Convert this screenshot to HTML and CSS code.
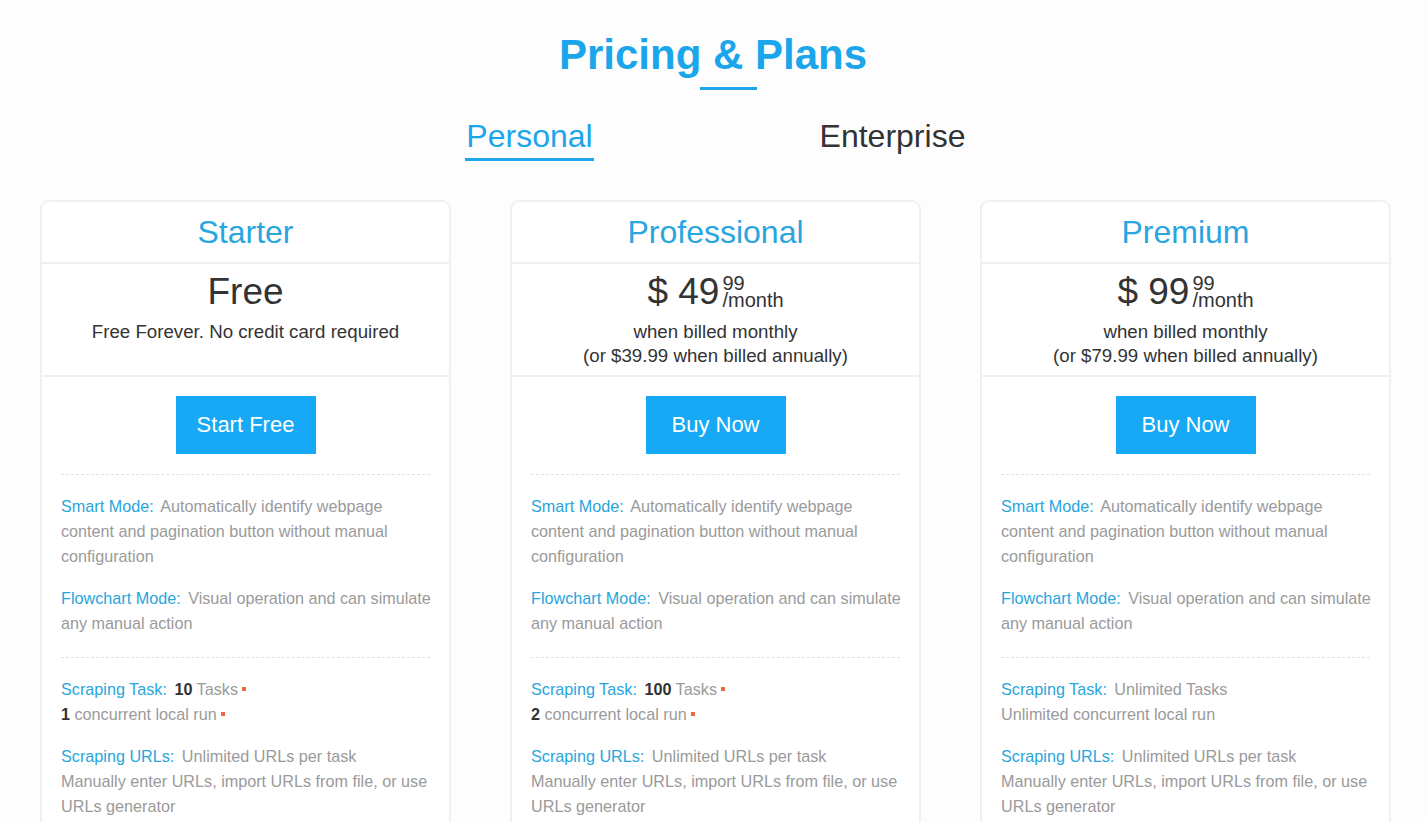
FILE: index.html
```html
<!DOCTYPE html>
<html>
<head>
<meta charset="utf-8">
<title>Pricing &amp; Plans</title>
<link rel="stylesheet" href="styles.css">
</head>
<body>
<div class="page">
  <h1 class="title">Pricing &amp; Plans</h1>
  <div class="title-bar"></div>
  <div class="tabs">
    <div class="tab"><span class="tab-label active">Personal</span></div>
    <div class="tab"><span class="tab-label">Enterprise</span></div>
  </div>
  <div class="cards">
    <div class="card">
      <div class="card-head">Starter</div>
      <div class="card-price">
        <div class="price-line"><span class="big">Free</span></div>
        <div class="price-note">Free Forever. No credit card required</div>
      </div>
      <div class="card-body">
        <div class="btn-row"><a class="btn">Start Free</a></div>
        <div class="group">
          <p class="feat"><span class="lbl">Smart Mode:</span> Automatically identify webpage content and pagination button without manual configuration</p>
          <p class="feat"><span class="lbl">Flowchart Mode:</span> Visual operation and can simulate any manual action</p>
        </div>
        <div class="group">
          <p class="feat"><span class="lbl">Scraping Task:</span> <b>10</b> Tasks<i class="dot"></i><br><b>1</b> concurrent local run<i class="dot"></i></p>
          <p class="feat"><span class="lbl">Scraping URLs:</span> Unlimited URLs per task<br>Manually enter URLs, import URLs from file, or use URLs generator</p>
        </div>
      </div>
    </div>
    <div class="card">
      <div class="card-head">Professional</div>
      <div class="card-price">
        <div class="price-line"><span class="big">$ 49</span><span class="sup"><span>99</span><span>/month</span></span></div>
        <div class="price-note">when billed monthly<br>(or $39.99 when billed annually)</div>
      </div>
      <div class="card-body">
        <div class="btn-row"><a class="btn">Buy Now</a></div>
        <div class="group">
          <p class="feat"><span class="lbl">Smart Mode:</span> Automatically identify webpage content and pagination button without manual configuration</p>
          <p class="feat"><span class="lbl">Flowchart Mode:</span> Visual operation and can simulate any manual action</p>
        </div>
        <div class="group">
          <p class="feat"><span class="lbl">Scraping Task:</span> <b>100</b> Tasks<i class="dot"></i><br><b>2</b> concurrent local run<i class="dot"></i></p>
          <p class="feat"><span class="lbl">Scraping URLs:</span> Unlimited URLs per task<br>Manually enter URLs, import URLs from file, or use URLs generator</p>
        </div>
      </div>
    </div>
    <div class="card">
      <div class="card-head">Premium</div>
      <div class="card-price">
        <div class="price-line"><span class="big">$ 99</span><span class="sup"><span>99</span><span>/month</span></span></div>
        <div class="price-note">when billed monthly<br>(or $79.99 when billed annually)</div>
      </div>
      <div class="card-body">
        <div class="btn-row"><a class="btn">Buy Now</a></div>
        <div class="group">
          <p class="feat"><span class="lbl">Smart Mode:</span> Automatically identify webpage content and pagination button without manual configuration</p>
          <p class="feat"><span class="lbl">Flowchart Mode:</span> Visual operation and can simulate any manual action</p>
        </div>
        <div class="group">
          <p class="feat"><span class="lbl">Scraping Task:</span> Unlimited Tasks<br>Unlimited concurrent local run</p>
          <p class="feat"><span class="lbl">Scraping URLs:</span> Unlimited URLs per task<br>Manually enter URLs, import URLs from file, or use URLs generator</p>
        </div>
      </div>
    </div>
  </div>
</div>
</body>
</html>
```
FILE: styles.css
```css
html, body {
  margin: 0;
  padding: 0;
  background: #fdfdfe;
  font-family: "Liberation Sans", Arial, sans-serif;
  color: #333;
  overflow: hidden;
}
.page {
  padding-top: 30px;
}
.title {
  margin: 0;
  text-align: center;
  font-size: 42px;
  line-height: 50px;
  font-weight: bold;
  color: #1ba6ec;
}
.title-bar {
  width: 57px;
  height: 3px;
  background: #1ba6ec;
  margin: 7px 0 0 calc(50% - 13px);
}
.tabs {
  display: flex;
  justify-content: center;
  margin-top: 28px;
  margin-left: -4px;
}
.tab {
  width: 363px;
  text-align: center;
}
.tab-label {
  display: inline-block;
  font-size: 32px;
  line-height: 36px;
  padding-bottom: 4px;
  border-bottom: 3px solid transparent;
  color: #333;
}
.tab-label.active {
  color: #1ba6ec;
  border-bottom-color: #1ba6ec;
  padding-left: 1px;
  padding-right: 1px;
}
.cards {
  display: grid;
  grid-template-columns: repeat(3, 411px);
  column-gap: 59px;
  margin: 39px 0 0 40px;
}
.card {
  background: #fff;
  border: 2px solid #eef0f3;
  border-radius: 9px;
  height: 700px;
}
.card-head {
  height: 60px;
  line-height: 60px;
  text-align: center;
  font-size: 32px;
  color: #29a5df;
  border-bottom: 2px solid #eef0f3;
}
.card-price {
  height: 113px;
  padding-top: 6px;
  box-sizing: border-box;
  text-align: center;
  border-bottom: 2px solid #eef0f3;
}
.price-line {
  height: 44px;
  display: flex;
  justify-content: center;
  align-items: center;
}
.big {
  font-size: 37px;
  line-height: 44px;
  color: #333;
}
.sup {
  display: inline-flex;
  flex-direction: column;
  align-items: flex-start;
  font-size: 20px;
  line-height: 17px;
  margin-left: 3px;
  margin-top: 0;
  color: #333;
}
.price-note {
  font-size: 18.7px;
  line-height: 24px;
  color: #333;
  margin-top: 6px;
}
.card-body {
  padding: 0 19px;
}
.btn-row {
  text-align: center;
  padding: 19px 0 20px;
}
.btn {
  display: inline-block;
  padding: 0 21px;
  min-width: 98px;
  height: 58px;
  line-height: 58px;
  font-size: 22px;
  color: #fff;
  background: #17a9f6;
  cursor: pointer;
}
.group {
  border-top: 1px dashed #dfe2e6;
  padding: 19px 0 4px;
}
.feat {
  margin: 0 -3px 17px 0;
  font-size: 16.2px;
  line-height: 25px;
  color: #9a9a9a;
}
.lbl {
  color: #2aa5dc;
  margin-right: 3px;
}
.feat b {
  color: #333;
  font-weight: bold;
}
.dot {
  display: inline-block;
  width: 4px;
  height: 4px;
  background: #e8683f;
  margin-left: 4px;
  vertical-align: middle;
  position: relative;
  top: -2px;
}
```
